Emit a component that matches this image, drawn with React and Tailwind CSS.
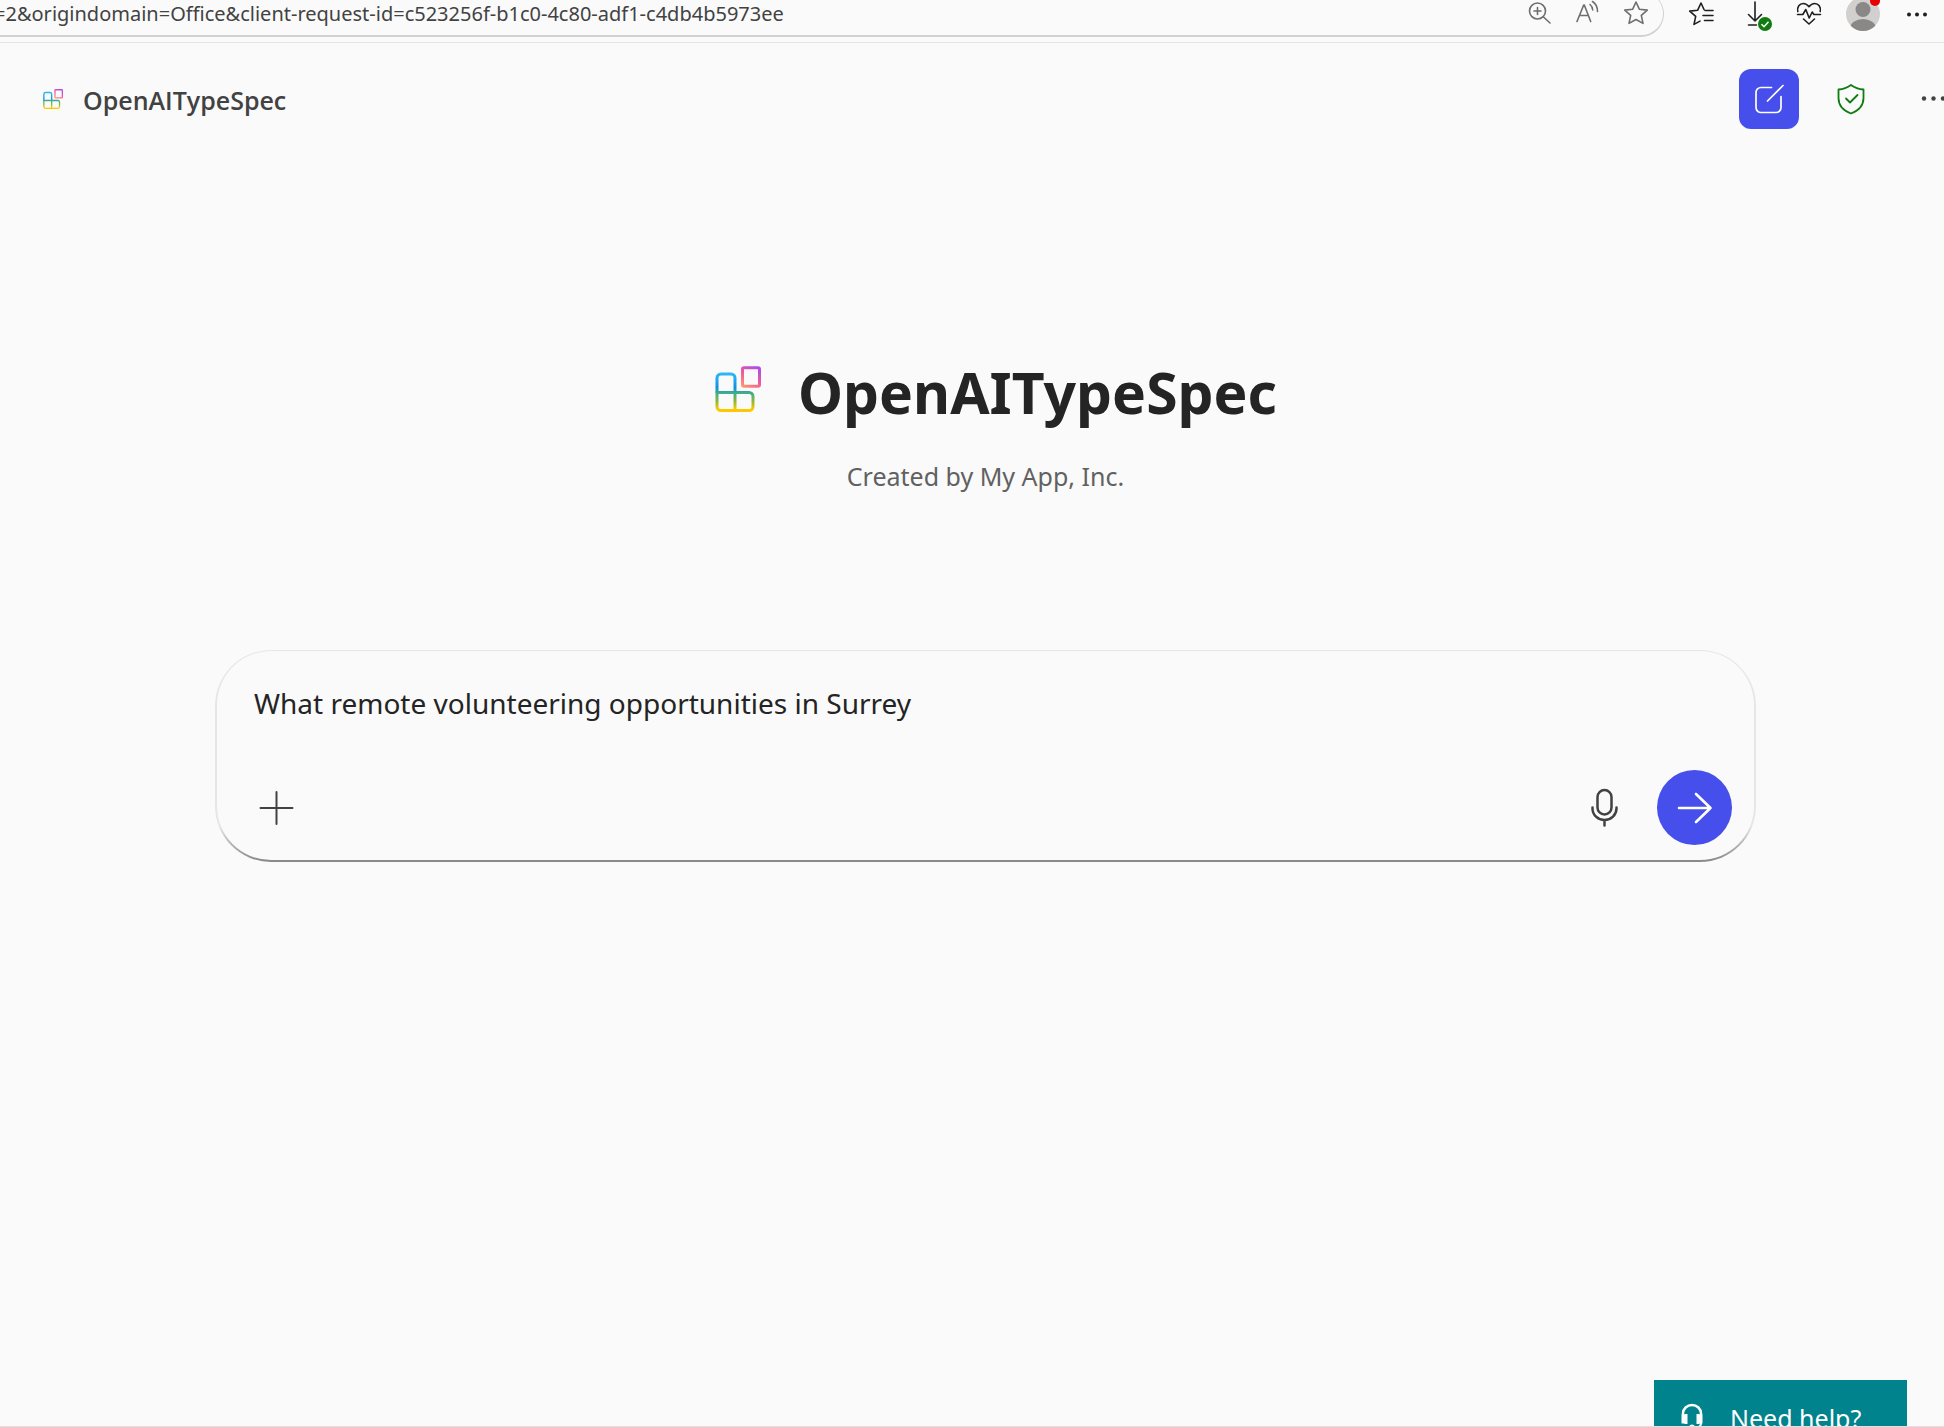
import { useState } from "react";

const PAGE_URL = "=2&origindomain=Office&client-request-id=c523256f-b1c0-4c80-adf1-c4db4b5973ee";

function AppLogo({ id, className }) {
    return (
        <svg viewBox="0 0 46 46" fill="none" strokeWidth="3" className={className} aria-hidden="true">
            <defs>
                <linearGradient id={`${id}-blocks`} x1="0" y1="8" x2="0" y2="46" gradientUnits="userSpaceOnUse">
                    <stop offset="0" stopColor="#2bb8f8" />
                    <stop offset="0.36" stopColor="#0f8fe0" />
                    <stop offset="0.5" stopColor="#3fae8c" />
                    <stop offset="0.72" stopColor="#8cb836" />
                    <stop offset="0.92" stopColor="#fcc900" />
                </linearGradient>
                <linearGradient id={`${id}-tile`} x1="44" y1="1" x2="30" y2="23" gradientUnits="userSpaceOnUse">
                    <stop offset="0" stopColor="#a84bf0" />
                    <stop offset="0.5" stopColor="#ee5a9c" />
                    <stop offset="1" stopColor="#ff9a6c" />
                </linearGradient>
            </defs>
            <g stroke={`url(#${id}-blocks)`}>
                <path d="M2 27V12a4 4 0 0 1 4-4H16a4 4 0 0 1 4 4V44.500" />
                <path d="M2 26.500H34a4 4 0 0 1 4 4V40.500a4 4 0 0 1-4 4H6a4 4 0 0 1-4-4Z" />
            </g>
            <rect x="27.500" y="1.700" width="17" height="18.500" rx="1.500" stroke={`url(#${id}-tile)`} />
        </svg>
    );
}

function BrowserIcon({ children, className = "text-[#1f1f1f]" }) {
    return (
        <svg
            viewBox="0 0 26 26"
            fill="none"
            stroke="currentColor"
            strokeWidth="1.6"
            strokeLinecap="round"
            strokeLinejoin="round"
            className={`size-[26px] ${className}`}
            aria-hidden="true"
        >
            {children}
        </svg>
    );
}

function BrowserBar() {
    return (
        <div className="flex h-[43px] items-start border-b border-[#e5e5e5]">
            {/* Address field, its upper part runs past the top edge */}
            <div className="flex h-[37px] min-w-0 flex-1 items-end overflow-hidden">
                <div className="flex h-[46px] w-full shrink-0 items-center rounded-r-full border-r border-b-2 border-[#d1d1d1] pr-[14px]">
                    <input
                        aria-label="Address"
                        defaultValue={PAGE_URL}
                        spellCheck={false}
                        className="-ml-[6px] min-w-0 flex-1 bg-transparent pt-0.5 text-[20px] leading-7 text-[#424242] outline-none"
                    />
                    <div className="flex gap-[22px]">
                        <button type="button" aria-label="Zoom">
                            <BrowserIcon className="text-[#6e6e6e]">
                                <circle cx="10.500" cy="11" r="8" />
                                <path d="M10.500 7.500v7M7 11h7M16.500 17l6.500 6" />
                            </BrowserIcon>
                        </button>
                        <button type="button" aria-label="Read aloud">
                            <BrowserIcon className="text-[#6e6e6e]">
                                <path d="M2 21.500 8.700 5h.6L15.700 21.500M4.600 15.500h8.800M15 4.500c1.600 1.300 2.500 3.200 2.700 5.500M17.500 1.500c3.200 2 5 5.500 5 10" />
                            </BrowserIcon>
                        </button>
                        <button type="button" aria-label="Add to favorites">
                            <BrowserIcon className="text-[#6e6e6e]">
                                <path d="m13 2 3.300 7.200 8 .9-6 5.300 1.700 8L13 19.500 6 23.400l1.700-8-6-5.300 8-.9Z" />
                            </BrowserIcon>
                        </button>
                    </div>
                </div>
            </div>

            {/* Toolbar */}
            <div className="flex h-[27px] items-center gap-7 pr-[14px] pl-6">
                <button type="button" aria-label="Favorites">
                    <BrowserIcon>
                        <path d="M16 8.500 13 2 9.700 9.200l-8 .9 6 5.300-1.700 8 6-3.300M17 9.500h8M15 14.500h10M16.500 19.500h8.500" />
                    </BrowserIcon>
                </button>
                <button type="button" aria-label="Downloads" className="relative">
                    <BrowserIcon>
                        <path d="M13 1v19M6.500 13.500 13 20l6.500-6.500M6.500 24h8" />
                    </BrowserIcon>
                    <svg viewBox="0 0 14 14" className="absolute top-[16px] left-[16px] size-[14px]" aria-hidden="true">
                        <circle cx="7" cy="7" r="7" fill="#107c10" />
                        <path d="m3.500 7.200 2.500 2.500 4.500-5" fill="none" stroke="#fff" strokeWidth="1.500" />
                    </svg>
                </button>
                <button type="button" aria-label="Browser essentials">
                    <BrowserIcon>
                        <path d="M1.800 10.500C.8 5.800 3.600 2.500 7.300 2.500c2.500 0 4.200 1.300 5.700 3.200 1.500-1.900 3.200-3.200 5.700-3.200 3.700 0 6.500 3.300 5.500 8M1.500 13.500h5.300l3-5 3.400 8.500 3-6 1.700 2.500h6.600M7.500 18l5.500 5 5.500-5" />
                    </BrowserIcon>
                </button>
                <button type="button" aria-label="Profile" className="relative -mx-1">
                    <svg viewBox="0 0 34 34" className="size-[34px]" aria-hidden="true">
                        <clipPath id="avatar-clip">
                            <circle cx="17" cy="17" r="17" />
                        </clipPath>
                        <g clipPath="url(#avatar-clip)">
                            <rect width="34" height="34" fill="#d2d0ce" />
                            <circle cx="17" cy="12.500" r="7.500" fill="#8a8886" />
                            <ellipse cx="17" cy="31.500" rx="13" ry="9.500" fill="#8a8886" />
                        </g>
                    </svg>
                    <span className="absolute -top-[1px] right-0 size-[10px] rounded-full bg-[#e60000]" />
                </button>
                <button type="button" aria-label="Settings and more">
                    <svg viewBox="0 0 26 26" fill="#1f1f1f" className="size-[26px]" aria-hidden="true">
                        <circle cx="5" cy="13.500" r="2" />
                        <circle cx="13" cy="13.500" r="2" />
                        <circle cx="21" cy="13.500" r="2" />
                    </svg>
                </button>
            </div>
        </div>
    );
}

function AppHeader() {
    return (
        <header className="flex h-[112px] items-center justify-between overflow-hidden pl-[43px]">
            <div className="flex items-center gap-5">
                <AppLogo id="small" className="size-5" />
                <span className="pt-0.5 font-['Open_Sans','Noto_Sans',sans-serif] text-[25px] leading-8 font-semibold text-[#424242]">
                    OpenAITypeSpec
                </span>
            </div>
            <div className="flex items-center">
                <button
                    type="button"
                    aria-label="New chat"
                    className="flex size-[60px] items-center justify-center rounded-xl bg-[#464feb]"
                >
                    <svg
                        viewBox="0 0 30 30"
                        fill="none"
                        stroke="#fff"
                        strokeWidth="1.7"
                        strokeLinecap="round"
                        className="size-[30px]"
                        aria-hidden="true"
                    >
                        <path d="M17.500 3.500H7A5 5 0 0 0 2 8.500V23.500A5 5 0 0 0 7 28.500H22A5 5 0 0 0 27 23.500V12.500M13.500 17 29 1.500" />
                    </svg>
                </button>
                <button type="button" aria-label="Protected" className="ml-9">
                    <svg
                        viewBox="0 0 32 32"
                        fill="none"
                        stroke="#107c10"
                        strokeWidth="1.800"
                        strokeLinecap="round"
                        strokeLinejoin="round"
                        className="size-8"
                        aria-hidden="true"
                    >
                        <path d="M16 2c3.600 2.700 7.700 4.200 12.500 4.500V15c0 7.300-4 12.300-12.500 15.500C7.500 27.300 3.500 22.300 3.500 15V6.500C8.300 6.200 12.400 4.700 16 2Z" />
                        <path d="m11 15.500 4 4 7.500-7.500" />
                    </svg>
                </button>
                <button type="button" aria-label="More options" className="ml-[54px] w-[23px] overflow-hidden">
                    <svg viewBox="0 0 24 24" fill="#424242" className="size-6 max-w-none" aria-hidden="true">
                        <circle cx="3" cy="11.500" r="2.200" />
                        <circle cx="12.500" cy="11.500" r="2.200" />
                        <circle cx="22" cy="11.500" r="2.200" />
                    </svg>
                </button>
            </div>
        </header>
    );
}

function Composer() {
    const [prompt, setPrompt] = useState("What remote volunteering opportunities in Surrey");

    return (
        // The outer box is the outline, darker along the bottom edge
        <form
            onSubmit={(e) => e.preventDefault()}
            className="mt-[156px] w-full max-w-[1541px] rounded-[56px] bg-[linear-gradient(to_top,#8a8a8a_2px,#e6e6e6_36px)] px-0.5 pt-px pb-0.5"
        >
            <div className="rounded-[54px] bg-[#fafafa] pt-[30px] pr-[22px] pb-[15px] pl-[37px]">
                <input
                    type="text"
                    aria-label="Message"
                    value={prompt}
                    onChange={(e) => setPrompt(e.target.value)}
                    className="block w-full bg-transparent text-[28px] leading-[44px] text-[#242424] outline-none"
                />
                <div className="mt-[45px] flex items-center justify-between">
                    <button type="button" aria-label="Add content" className="p-1">
                        <svg
                            viewBox="0 0 36 36"
                            fill="none"
                            stroke="#424242"
                            strokeWidth="2"
                            strokeLinecap="round"
                            className="size-9"
                            aria-hidden="true"
                        >
                            <path d="M18.500 2v32M2.500 18h32" />
                        </svg>
                    </button>
                    <div className="flex items-center gap-8">
                        <button type="button" aria-label="Dictate">
                            <svg
                                viewBox="0 0 40 40"
                                fill="none"
                                stroke="#424242"
                                strokeWidth="2.500"
                                strokeLinecap="round"
                                className="size-10"
                                aria-hidden="true"
                            >
                                <rect x="12.500" y="2" width="14" height="24.500" rx="7" />
                                <path d="M7.500 19.500v1a12 11.500 0 0 0 24 0v-1M19.500 32v5.500" />
                            </svg>
                        </button>
                        <button
                            type="submit"
                            aria-label="Send"
                            className="flex size-[75px] items-center justify-center rounded-full bg-[#464feb]"
                        >
                            <svg
                                viewBox="0 0 36 36"
                                fill="none"
                                stroke="#fff"
                                strokeWidth="2.600"
                                strokeLinecap="round"
                                strokeLinejoin="round"
                                className="size-9"
                                aria-hidden="true"
                            >
                                <path d="M2 18H33.500M19 4 33.500 18 19 32" />
                            </svg>
                        </button>
                    </div>
                </div>
            </div>
        </form>
    );
}

export default function App() {
    return (
        <div className="flex h-screen flex-col overflow-hidden border-b border-[#e0e0e0] bg-[#fafafa] font-['Noto_Sans','Open_Sans',sans-serif]">
            <BrowserBar />
            <AppHeader />

            <main className="flex flex-1 flex-col items-center pt-[197px] pl-[27px]">
                <div className="flex items-center gap-[37px] pl-[21px]">
                    <AppLogo id="large" className="mb-1.5 size-[46px]" />
                    <h1 className="text-[57px] leading-[80px] font-bold text-[#242424]">OpenAITypeSpec</h1>
                </div>
                <p className="mt-[26px] text-[25px] leading-9 text-[#616161]">Created by My App, Inc.</p>
                <Composer />
            </main>

            {/* Help button, cut off by the bottom of the window */}
            <footer className="flex h-[46px] items-start justify-end overflow-hidden pr-[37px]">
                <button
                    type="button"
                    className="flex h-[76px] w-[253px] shrink-0 items-center gap-[26px] bg-[#00838c] pl-[26px] text-[25px] leading-9 text-white"
                >
                    <svg
                        viewBox="0 0 24 30"
                        fill="none"
                        stroke="currentColor"
                        strokeWidth="2.500"
                        className="h-[30px] w-6"
                        aria-hidden="true"
                    >
                        <path d="M3 12V10.500a9 8.500 0 0 1 18 0V12" />
                        <path d="M3 11.500v9M6 11v10M18 11v10M21 11.500v9" strokeWidth="3" />
                        <path d="M21 20c0 3.500-3 5-7 5" strokeWidth="2" />
                        <circle cx="12" cy="24.500" r="3" fill="currentColor" stroke="none" />
                    </svg>
                    Need help?
                </button>
            </footer>
        </div>
    );
}
